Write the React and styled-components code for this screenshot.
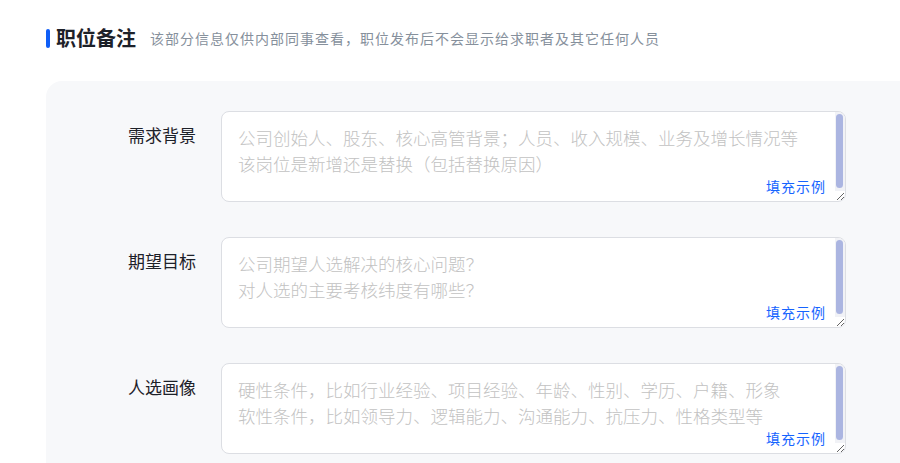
import styled, { createGlobalStyle } from 'styled-components'

const GlobalStyle = createGlobalStyle`
	html, body {
		margin: 0;
		padding: 0;
		background: #ffffff;
		overflow: hidden;
		font-family: "Noto Sans CJK SC", "Noto Sans", sans-serif;
	}
`

const Page = styled.div`
	width: 1000px;
	padding: 27px 0 0 46px;
`

const Header = styled.div`
	display: flex;
	align-items: center;
	height: 22px;
`

const Bar = styled.span`
	width: 4px;
	height: 19px;
	border-radius: 2px;
	background: #0f5ef7;
	margin-right: 6px;
`

const Title = styled.h2`
	margin: 0;
	font-size: 20px;
	font-weight: 700;
	color: #1d2129;
	line-height: 22px;
`

const Subtitle = styled.span`
	margin-left: 14px;
	font-size: 14px;
	letter-spacing: 1px;
	color: #86909c;
	line-height: 22px;
`

const Panel = styled.section`
	margin-top: 32px;
	background: #f7f8fa;
	border-radius: 16px 0 0 0;
	padding: 30px 0 30px 0;
	display: flex;
	flex-direction: column;
	gap: 35px;
`

const Row = styled.div`
	display: flex;
	align-items: flex-start;
`

const Label = styled.label`
	width: 150px;
	flex: none;
	text-align: right;
	padding-top: 11px;
	margin-right: 25px;
	font-size: 17px;
	line-height: 26px;
	color: #1d2129;
`

const Field = styled.div`
	position: relative;
	width: 625px;
	height: 91px;
`

const Area = styled.textarea`
	box-sizing: border-box;
	width: 100%;
	height: 100%;
	border: 1px solid #dcdee3;
	border-radius: 8px;
	background: #ffffff;
	padding: 13px 26px 0 16px;
	font-family: "Noto Sans CJK SC", "Noto Sans", sans-serif;
	font-size: 17.5px;
	font-weight: 300;
	line-height: 26px;
	color: #1d2129;
	resize: vertical;
	overflow: hidden;
	outline: none;

	&::placeholder {
		color: #c2c2c2;
	}
`

const Track = styled.div`
	position: absolute;
	top: 1px;
	right: 1px;
	bottom: 11px;
	width: 10px;
	box-sizing: border-box;
	padding: 2px 2px 3px 1px;
	background: #f1f2f6;
	border-top-right-radius: 7px;
	pointer-events: none;
`

const Thumb = styled.div`
	height: 100%;
	border-radius: 4px;
	background: #abb5e1;
`

const FillLink = styled.a`
	position: absolute;
	right: 20px;
	bottom: 7px;
	font-size: 14px;
	letter-spacing: 1px;
	line-height: 18px;
	color: #1664ff;
	cursor: pointer;
`

const fields = [
	{
		key: 'background',
		label: '需求背景',
		placeholder: '公司创始人、股东、核心高管背景；人员、收入规模、业务及增长情况等\n该岗位是新增还是替换（包括替换原因）',
	},
	{
		key: 'goal',
		label: '期望目标',
		placeholder: '公司期望人选解决的核心问题？\n对人选的主要考核纬度有哪些？',
	},
	{
		key: 'profile',
		label: '人选画像',
		placeholder: '硬性条件，比如行业经验、项目经验、年龄、性别、学历、户籍、形象\n软性条件，比如领导力、逻辑能力、沟通能力、抗压力、性格类型等',
	},
]

const App = () => {
	return (
		<>
			<GlobalStyle />
			<Page>
				<Header>
					<Bar />
					<Title>职位备注</Title>
					<Subtitle>该部分信息仅供内部同事查看，职位发布后不会显示给求职者及其它任何人员</Subtitle>
				</Header>
				<Panel>
					{fields.map((field) => (
						<Row key={field.key}>
							<Label>{field.label}</Label>
							<Field>
								<Area placeholder={field.placeholder} />
								<Track>
									<Thumb />
								</Track>
								<FillLink>填充示例</FillLink>
							</Field>
						</Row>
					))}
				</Panel>
			</Page>
		</>
	)
}

export default App
